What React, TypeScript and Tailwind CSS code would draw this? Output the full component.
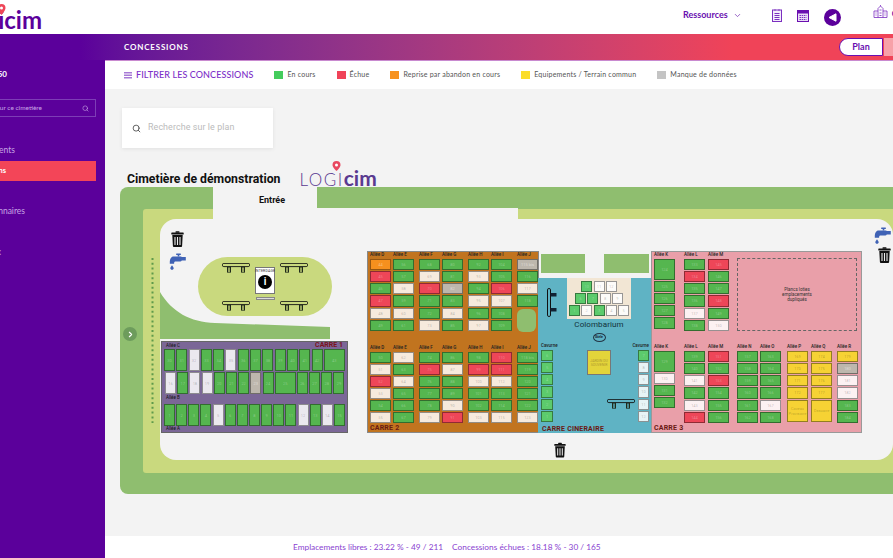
import React from "react";
import { ChevronDown, ChevronRight, Search } from "lucide-react";

const ORIGIN_X = 105;
const ORIGIN_Y = 187;
const at = (x: number, y: number) => ({ left: x - ORIGIN_X, top: y - ORIGIN_Y });

const FILL: Record<string, string> = {
  g: "bg-[#55b64f] text-white/30",
  h: "bg-[#5ccb6c] text-white/30",
  r: "bg-[#ee4658] text-white/30",
  w: "bg-white/85 text-black/25",
  o: "bg-[#f5901e] text-white/40",
  y: "bg-[#f6d234] text-black/25",
  s: "bg-[#bdb7ad] text-white/50",
};

function Cell({ spec, w, h = 11.15 }: { spec: string; w: number; h?: number }) {
  const [c, label, tall] = spec.split(":");
  return (
    <div
      className={`flex shrink-0 items-center justify-center border border-black/40 text-center text-[4px] leading-[5px] ${FILL[c]}`}
      style={{ width: w, height: tall ? Number(tall) : h }}
    >
      {label}
    </div>
  );
}

function Col({
  w = 21,
  label,
  cells,
  className = "",
  labelClass = "",
  children,
}: {
  w?: number;
  label: string;
  cells: string;
  className?: string;
  labelClass?: string;
  children?: React.ReactNode;
}) {
  return (
    <div className={`flex shrink-0 flex-col gap-px ${className}`} style={{ width: w }}>
      <div className={`flex h-[6px] whitespace-nowrap text-[4.5px] font-medium leading-[6px] text-[#222] ${labelClass}`}>{label}</div>
      {cells.split(",").map((s) => (
        <Cell key={s} spec={s} w={w} />
      ))}
      {children}
    </div>
  );
}

function Trash({ x, y, w = 13, h = 16 }: { x: number; y: number; w?: number; h?: number }) {
  return (
    <svg className="absolute" style={{ ...at(x, y), width: w, height: h }} viewBox="0 0 13 16">
      <rect x="4.5" y="0.2" width="4" height="1.6" rx="0.6" fill="#111" />
      <rect x="0.3" y="1.5" width="12.4" height="2" rx="0.6" fill="#111" />
      <path d="M1.3 4h10.4l-.6 11a1 1 0 0 1-1 1H2.9a1 1 0 0 1-1-1z" fill="#111" />
      <path d="M4 6v8M6.5 6v8M9 6v8" stroke="#eee" strokeWidth="1.1" />
    </svg>
  );
}

function Tap({ x, y }: { x: number; y: number }) {
  return (
    <svg className="absolute" style={{ ...at(x, y), width: 17, height: 17 }} viewBox="0 0 17 17" fill="#3f62b5">
      <rect x="7" y="0.5" width="5" height="1.5" rx="0.7" />
      <rect x="8.7" y="1.5" width="1.6" height="2" />
      <path d="M4.5 3.5h7c1 0 1.2.5 1.2.6h4.1v3.4h-4c-.4.6-.8.9-1.5.9H6.5c-.8 0-1.4.7-1.4 1.6v.8H.8V9.4C.8 6 2.2 3.5 4.5 3.5z" />
      <path d="M3 12.3c1 1.5 1.7 2.2 1.7 3 0 .9-.7 1.5-1.7 1.5s-1.7-.6-1.7-1.5c0-.8.7-1.500 1.7-3z" />
    </svg>
  );
}

function Bench({ bg = "#c9d97e" }: { bg?: string }) {
  return (
    <svg className="block h-[10px] w-[28px]" viewBox="0 0 28 10">
      <rect x="0.4" y="0.4" width="27.2" height="3.2" rx="1.4" fill={bg} stroke="#111" strokeWidth="0.9" />
      <rect x="5" y="3.6" width="4" height="6" fill="#1f2a1a" />
      <rect x="19" y="3.6" width="4" height="6" fill="#1f2a1a" />
      <rect x="6.3" y="4.5" width="1.4" height="4.5" fill={bg} />
      <rect x="20.3" y="4.5" width="1.4" height="4.5" fill={bg} />
    </svg>
  );
}

function Legend({ color, label }: { color: string; label: string }) {
  return (
    <div className="flex items-center gap-[4px]">
      <span className={`h-[8px] w-[9px] ${color}`} />
      <span className="whitespace-nowrap text-[7.05px] tracking-[0.2px] text-[#555]">{label}</span>
    </div>
  );
}

function Carre1() {
  const row1 = "g:30,g:31,w:32,g:33,g:34,w:35,g:36,g:37,g:38,g:39,g:40,g:41,g:42,g:43".split(",");
  const row2 = "w:16,g:17,w:18,w:19,g:20,g:21,g:22,s:23,g:24,g:25,g:26,g:27,g:28,g:29".split(",");
  const row3 = "g:1,g:2,g:3,g:4,w:5,g:6,g:7,g:8,g:9,g:10,g:11,w:12,g:13,w:14,g:15".split(",");
  return (
    <div className="absolute left-[56px] top-[154px] flex h-[92px] w-[187px] flex-col border border-[#666] bg-[#7b6797] pl-[2px] text-[4.5px] leading-[6px] text-[#111]">
      <span className="absolute right-[4px] top-[-2px] text-[7px] font-bold leading-[10px] text-[#7a1420]">CARRE 1</span>
      <span className="h-[6px] pl-[2px] pt-[1px]">Allée C</span>
      <div className="mt-px flex gap-[1.3px]">
        {row1.map((s) => <Cell key={s} spec={s} w={s === "g:43" ? 21 : 11} h={22} />)}
      </div>
      <div className="mt-px flex gap-[1.2px] pl-px">
        {row2.map((s) => <Cell key={s} spec={s} w={s === "g:25" ? 21 : 11} h={22} />)}
      </div>
      <span className="h-[11px] pl-[2px] pt-px">Allée B</span>
      <div className="flex gap-[1.15px]">
        {row3.map((s) => <Cell key={s} spec={s} w={11} h={22} />)}
      </div>
      <span className="pl-[2px]">Allée A</span>
    </div>
  );
}

function Carre2() {
  return (
    <div className="absolute left-[262px] top-[64px] h-[182px] w-[172px] border border-[#888] bg-[#c1741f] pl-[2px]">
      <div className="flex gap-[5px]">
        <div className="flex gap-[2px]">
          <Col label="Allée D" cells="o:44,r:45,g:46,r:47,w:48,g:49" />
          <Col label="Allée E" cells="g:56,g:57,w:58,g:59,w:60,g:61" />
        </div>
        <div className="flex gap-[2px]">
          <Col label="Allée F" cells="g:68,w:69,r:70,g:71,g:72,w:73" />
          <Col label="Allée G" cells="g:80,g:81,s:82,g:83,w:84,g:85" />
        </div>
        <div className="flex gap-[2px]">
          <Col label="Allée H" cells="g:92,w:93,g:94,w:95,g:96,w:97" />
          <Col label="Allée I" cells="g:104,g:105,r:106,w:107,g:108,g:109" />
        </div>
        <Col label="Allée J" cells="s:115 bis,g:116,w:117,g:118">
          <div className="mt-px h-[23px] w-[19px] rounded-md bg-[#8fbe6f]" />
        </Col>
      </div>
      <div className="mt-[13px] flex gap-[5px]">
        <div className="flex gap-[2px]">
          <Col label="Allée D" cells="g:50,w:51,r:52,w:53,g:54,w:55" />
          <Col label="Allée E" cells="w:62,g:63,w:64,g:65,g:66,g:67" />
        </div>
        <div className="flex gap-[2px]">
          <Col label="Allée F" cells="g:74,r:75,g:76,g:77,g:78,w:79" />
          <Col label="Allée G" cells="g:86,w:87,g:88,g:89,w:90,r:91" />
        </div>
        <div className="flex gap-[2px]">
          <Col label="Allée H" cells="g:98,r:99,w:100,g:101,g:102,w:103" />
          <Col label="Allée I" cells="r:110,r:111,w:112,g:113,g:114,w:115" />
        </div>
        <Col label="Allée J" cells="g:118 bis,g:119,g:120,g:121,g:122,w:123" />
      </div>
      <span className="absolute bottom-[-1px] left-[2px] text-[7px] font-bold leading-[10px] tracking-[0.2px] text-[#6a1a14]">CARRE 2</span>
    </div>
  );
}

function Cineraire() {
  return (
    <div className="absolute left-[433px] top-[91px] flex h-[155px] w-[114px] items-start justify-between bg-[#5fb3c4] px-[3px] pt-[65px]">
      <Col w={12} label="Cavurne" cells="h:6,h:5,h:4,h:3,h:2,h:1" labelClass="text-[#123]" />
      <Col w={11} label="Cavurne" cells="h:7,w:8,w:9,w:10,w:11,w:12" labelClass="justify-end text-[#123]" />

      <div className="absolute left-[29px] top-0 flex w-[64px] flex-col items-center">
        <div className="flex h-[41px] w-full flex-col items-center gap-px bg-[#f2e6d4] pt-[3px]">
          <div className="flex gap-[1.3px]">
            <Cell spec="h:10" w={11} /><Cell spec="w:11" w={11} /><Cell spec="w:12" w={11} />
          </div>
          <div className="flex gap-[1.3px]">
            <Cell spec="h:6" w={11} /><Cell spec="h:7" w={11} /><Cell spec="w:8" w={11} /><Cell spec="w:9" w={11} />
          </div>
          <div className="flex gap-[1.3px]">
            <Cell spec="h:1" w={11} /><Cell spec="w:2" w={11} /><Cell spec="h:3" w={11} /><Cell spec="w:4" w={11} /><Cell spec="w:5" w={11} />
          </div>
        </div>
        <span className="text-[8px] leading-[11px] tracking-[0.1px] text-[#12313a]">Colombarium</span>
        <span className="mt-[3px] flex h-[9px] w-[13px] items-center justify-center rounded-[50%] border border-[#234] text-[3.5px] font-bold text-[#123]">Stèle</span>
        <span className="mt-[8px] flex h-[25px] w-[24px] items-center justify-center border border-[#777] bg-[#e3d43a] text-center text-[3.5px] leading-[4px] text-[#b09a30]">JARDIN DU SOUVENIR</span>
      </div>

      <svg className="absolute left-[9px] top-[10px] h-[29px] w-[10px]" viewBox="0 0 10 29">
        <rect x="0.5" y="0.5" width="3" height="28" rx="1.4" fill="#5fb3c4" stroke="#111" />
        <rect x="3.5" y="5" width="6" height="3.5" fill="#123" />
        <rect x="3.5" y="20" width="6" height="3.5" fill="#123" />
      </svg>
      <div className="absolute left-[69px] top-[121px]">
        <Bench bg="#5fb3c4" />
      </div>
      <span className="absolute bottom-[-1px] left-[4px] whitespace-nowrap text-[7px] font-bold leading-[10px] tracking-[0.2px] text-[#6a1a14]">CARRE CINERAIRE</span>
    </div>
  );
}

function Carre3() {
  return (
    <div className="absolute left-[546px] top-[64px] h-[182px] w-[211px] border border-[#999] bg-[#e99fa9] pl-[2px]">
      <div className="flex items-start">
        <Col label="Allée K" cells="g:124:21,g:125,g:126,g:127,g:128" />
        <Col className="ml-[9px]" label="Allée L" cells="g:133,r:134,g:135,g:136,w:137,g:138" />
        <Col className="ml-[3px]" label="Allée M" cells="r:145,g:146,g:147,r:148,g:149,w:150" />
        <div className="ml-[8px] mt-[6px] flex h-[73px] w-[120px] items-center justify-center border border-dashed border-[#666] text-center text-[4.5px] leading-[5px] text-[#333]">
          Plancs loties<br />emplacements<br />dupliqués
        </div>
      </div>
      <div className="mt-[13px] flex items-start">
        <Col label="Allée K" cells="g:129:21,w:130,g:131,g:132" />
        <Col className="ml-[9px]" label="Allée L" cells="g:139,g:140,w:141,g:142,w:143,r:144" />
        <Col className="ml-[3px]" label="Allée M" cells="r:151,g:152,r:153,g:154,g:155,g:156" />
        <Col className="ml-[8px]" label="Allée N" cells="g:157,g:158,g:159,g:160,g:161,g:162" />
        <Col className="ml-[2px]" label="Allée O" cells="g:163,g:164,g:165,g:166,w:167,g:168" />
        <Col className="ml-[6px]" label="Allée P" cells="y:169,y:170,y:171,y:172,y:Caveau Provisoire:22" />
        <Col className="ml-[3px]" label="Allée Q" cells="y:174,y:175,y:176,y:177,y:Ossuaire:22" />
        <Col className="ml-[5px]" label="Allée R" cells="y:179,s:180,w:181,w:182,g:183,g:184" />
      </div>
      <span className="absolute bottom-[-1px] left-[2px] text-[7px] font-bold leading-[10px] tracking-[0.2px] text-[#6a1a14]">CARRE 3</span>
    </div>
  );
}

function Plan() {
  return (
    <div className="relative h-[307px] font-['Roboto',sans-serif]">
      <div className="absolute left-[15px] top-0 h-[307px] w-[800px] rounded-lg bg-[#8fbe6f]" />
      <div className="absolute left-[38px] top-[22px] h-[264px] w-[790px] rounded-[3px] bg-[#c9d97e]" />
      <div className="absolute left-[55px] top-[32px] h-[241px] w-[733px] rounded-2xl bg-[#f3f3f3]" />
      <div className="absolute left-[108px] top-0 h-[32px] w-[104px] bg-[#f3f3f3]" />
      <div className="absolute left-[212px] top-[21px] h-[11px] w-[201px] bg-[#f3f3f3]" />
      <div className="absolute left-[154px] top-[7px] text-[9px] font-bold text-[#111]">Entrée</div>

      <Trash x={171} y={231} />
      <Tap x={169} y={253} />
      <Tap x={874} y={227} />
      <Trash x={878} y={247} />
      <Trash x={554} y={442} w={12} />

      <svg className="absolute left-[46px] top-[71px] h-[165px] w-[3px]" viewBox="0 0 3 165">
        <line x1="1.5" y1="0" x2="1.5" y2="165" stroke="#5f9a4a" strokeWidth="2" strokeDasharray="2 2.8" />
      </svg>

      {/* Aire de repos */}
      <div className="absolute left-[93px] top-[70px] flex h-[59px] w-[134px] items-center justify-center gap-[5px] rounded-[30px] bg-[#c9d97e]">
        <div className="flex flex-col gap-[28px]">
          <Bench />
          <Bench />
        </div>
        <div className="mb-[6px] flex flex-col items-center gap-[3px]">
          <div className="flex h-[27px] w-[20px] flex-col items-center border border-[#777] bg-white">
            <span className="text-[3.5px] leading-[7px] tracking-[0.2px] text-[#333]">INTERDAGE</span>
            <span className="flex h-[14px] w-[14px] items-center justify-center rounded-full bg-black text-[10px] font-bold leading-none text-white">i</span>
          </div>
          <div className="h-[3px] w-[19px] border border-[#888] bg-[#ddd]" />
        </div>
        <div className="flex flex-col gap-[28px]">
          <Bench />
          <Bench />
        </div>
      </div>

      <svg className="absolute left-[55px] top-[105px] h-[47px] w-[170px]" viewBox="0 0 170 47">
        <path d="M0 0C12 20 30 30 55 31L170 35V47H0Z" fill="#8fbe6f" />
      </svg>

      <div className="absolute left-[18px] top-[140px] flex h-[14px] w-[14px] items-center justify-center rounded-full bg-[#6d9c5c] text-white">
        <ChevronRight size={9} strokeWidth={3} />
      </div>

      <Carre1 />
      <Carre2 />
      <div className="absolute left-[436px] top-[67px] h-[19px] w-[44px] bg-[#8fbe6f]" />
      <div className="absolute left-[499px] top-[67px] h-[19px] w-[45px] bg-[#8fbe6f]" />
      <Cineraire />
      <Carre3 />
    </div>
  );
}

function SideRow({ label, width, className }: { label: string; width: string; className: string }) {
  return <div className={`flex justify-end whitespace-nowrap ${width} ${className}`}>{label}</div>;
}

export default function App() {
  return (
    <div className="relative h-[558px] w-[893px] overflow-hidden bg-white font-['Lato',sans-serif]">
      {/* En-tête */}
      <header className="relative flex h-[34px] items-center overflow-hidden bg-white">
        <svg className="absolute left-[-3px] top-[4px] h-[11px] w-[9px]" viewBox="0 0 9 11">
          <path d="M4.5 0a4 4 0 0 1 4 4c0 2.5-4 7-4 7s-4-4.5-4-7a4 4 0 0 1 4-4z" fill="#ee4658" />
          <circle cx="4.5" cy="4" r="1.5" fill="#fff" />
        </svg>
        <div className="mt-[5px] flex w-[42px] shrink-0 justify-end whitespace-nowrap text-[24px] font-bold leading-[28px] text-[#5b009b]">Logicim</div>
        <div className="ml-[641px] mt-[-4px] flex shrink-0 items-center gap-[4px] text-[9px] font-bold text-[#6a0fb0]">
          Ressources
          <ChevronDown size={9} className="ml-[1px] text-[#7a35b5]" />
        </div>
        <svg className="ml-[30px] mt-[-4px] h-[13px] w-[10px] shrink-0" viewBox="0 0 10 13" fill="none" stroke="#7b2fc0" strokeWidth="1">
          <rect x="0.5" y="1" width="9" height="11.5" fill="#f4edfb" />
          <path d="M3 .3v1.5M7 .3v1.5M2.5 4.5h5M2.5 6.5h5M2.5 8.5h5M2.5 10.5h5" />
        </svg>
        <svg className="ml-[15px] mt-[-4px] h-[13px] w-[12px] shrink-0" viewBox="0 0 12 13">
          <rect x="0.5" y="1.5" width="11" height="11" fill="#e9dcf5" stroke="#6a0fb0" />
          <rect x="0" y="1" width="12" height="3.5" fill="#6a0fb0" />
          <path d="M2.5 6.5h7M2.5 8.5h7M2.5 10.5h7" stroke="#7b2fc0" strokeDasharray="1.5 .7" />
        </svg>
        <span className="ml-[15px] flex h-[17px] w-[17px] shrink-0 items-center justify-center rounded-full bg-[#5b009b]">
          <svg className="h-[9px] w-[9px]" viewBox="0 0 9 9">
            <path d="M1 4.5L8 .8v7.4z" fill="#fff" stroke="#fff" strokeLinejoin="round" />
          </svg>
        </span>
        <svg className="ml-[32px] mt-[-11px] h-[13px] w-[15px] shrink-0" viewBox="0 0 15 13" fill="none" stroke="#7b2fc0" strokeWidth="0.8">
          <path d="M1 12.5V6h4V3.5L7.5 1 10 3.5V6h4v6.5zM5 6v6.5M10 6v6.5M7.5 1v-1" />
          <path d="M2.5 8h1M2.5 10h1M11.5 8h1M11.5 10h1M6.5 5h2M6.500 8h2M6.500 10.500h2" />
        </svg>
        <span className="ml-[4px] mt-[-6px] shrink-0 whitespace-nowrap text-[9px] font-bold text-[#6a0fb0]">Cimetière</span>
      </header>

      {/* Bandeau */}
      <div className="relative flex h-[26px] items-center bg-gradient-to-r from-[#5b009b] from-[9%] to-[#f04358] to-[82%] pl-[124px]">
        <span className="text-[8px] font-bold tracking-[0.8px] text-white">CONCESSIONS</span>
        <div className="absolute left-[839px] top-[4px] flex h-[18px] w-[44px] items-center justify-center rounded-l-full border border-[#6a0fb0] bg-white text-[9px] font-bold text-[#6a0fb0]">Plan</div>
        <div className="absolute left-[884px] top-[4px] h-[18px] w-[30px] bg-[#f7a1a8]" />
      </div>

      <div className="flex h-[498px]">
        {/* Menu latéral */}
        <aside className="h-full w-[105px] shrink-0 overflow-hidden bg-[#5b009b] text-white">
          <SideRow label="Cimetière 1150" width="w-[7px]" className="mt-[8px] text-[8px] font-bold" />
          <div className="ml-[-60px] mt-[19px] flex h-[18px] w-[156px] items-center justify-between border border-[#7d3db6] pl-[20px] pr-[6px] text-[#c9a8e6]">
            <span className="whitespace-nowrap text-[6.5px] leading-[10px]">Recherche pour ce cimetière</span>
            <Search size={7} />
          </div>
          <SideRow label="Emplacements" width="w-[15px]" className="mt-[27px] text-[8.5px] leading-[12px] text-[#c7a5e4]" />
          <div className="mt-[5px] flex h-[20px] w-[96px] items-center bg-[#f34558] text-[7.5px] font-bold">
            <div className="flex w-[6px] justify-end whitespace-nowrap">Concessions</div>
          </div>
          <SideRow label="Gestionnaires" width="w-[25px]" className="mt-[24px] text-[8.5px] leading-[12px] text-[#c7a5e4]" />
          <SideRow label="Travaux" width="w-[1px]" className="mt-[29px] text-[8.5px] leading-[12px] text-[#c7a5e4]" />
        </aside>

        <main className="flex min-w-0 flex-1 flex-col">
          <div className="h-px shrink-0 bg-[#c98ad0]" />
          {/* Filtres */}
          <div className="flex h-[28px] shrink-0 items-center gap-[21px] whitespace-nowrap bg-white pl-[19px]">
            <div className="flex items-center gap-[4px]">
              <svg className="h-[7px] w-[8px]" viewBox="0 0 8 7" fill="#a77ad6">
                <rect y="0" width="8" height="1.5" />
                <rect y="2.5" width="8" height="1.5" />
                <rect y="5" width="8" height="1.5" />
              </svg>
              <span className="text-[9px] font-medium tracking-[0.1px] text-[#7d30c8]">FILTRER LES CONCESSIONS</span>
            </div>
            <Legend color="bg-[#44cc5c]" label="En cours" />
            <Legend color="bg-[#f04358]" label="Échue" />
            <Legend color="bg-[#f7921e]" label="Reprise par abandon en cours" />
            <Legend color="bg-[#fbdd2b]" label="Equipements / Terrain commun" />
            <Legend color="bg-[#c4c4c4]" label="Manque de données" />
          </div>

          {/* Contenu */}
          <div className="min-h-0 flex-1 bg-[#f3f3f3]">
            <div className="ml-[17px] mt-[19px] flex h-[40px] w-[151px] items-center gap-[7px] bg-white pl-[10px] shadow-[0_1px_4px_rgba(0,0,0,0.08)]">
              <Search size={9} className="text-[#444]" strokeWidth={2.2} />
              <span className="font-['Roboto',sans-serif] text-[8.9px] tracking-[0.1px] text-[#bbb]">Recherche sur le plan</span>
            </div>
            <div className="relative flex h-[39px] items-start pl-[22px] pt-[23px]">
              <span className="whitespace-nowrap font-['Roboto',sans-serif] text-[12.25px] font-bold leading-[17px] text-[#111]">Cimetière de démonstration</span>
              <span className="relative ml-[19px] mt-[-4px] whitespace-nowrap text-[17px] font-light leading-[22px] tracking-[1.5px] text-[#5a3a90]">
                LOGI<span className="text-[21px] font-bold tracking-normal">cim</span>
                <svg className="absolute left-[33px] top-[-6px] h-[10px] w-[9px]" viewBox="0 0 9 10">
                  <path d="M4.5 0a4 4 0 0 1 4 4c0 2.5-4 6-4 6s-4-3.5-4-6a4 4 0 0 1 4-4z" fill="#e8475f" />
                  <circle cx="4.5" cy="4" r="1.5" fill="#fff" />
                </svg>
              </span>
            </div>
            <Plan />
          </div>

          {/* Pied */}
          <div className="flex h-[22px] shrink-0 items-center gap-[9px] bg-white pl-[188px] text-[8.3px] text-[#8a3fd1]">
            <span>Emplacements libres : 23.22 % - 49 / 211</span>
            <span>Concessions échues : 18.18 % - 30 / 165</span>
          </div>
        </main>
      </div>
    </div>
  );
}
